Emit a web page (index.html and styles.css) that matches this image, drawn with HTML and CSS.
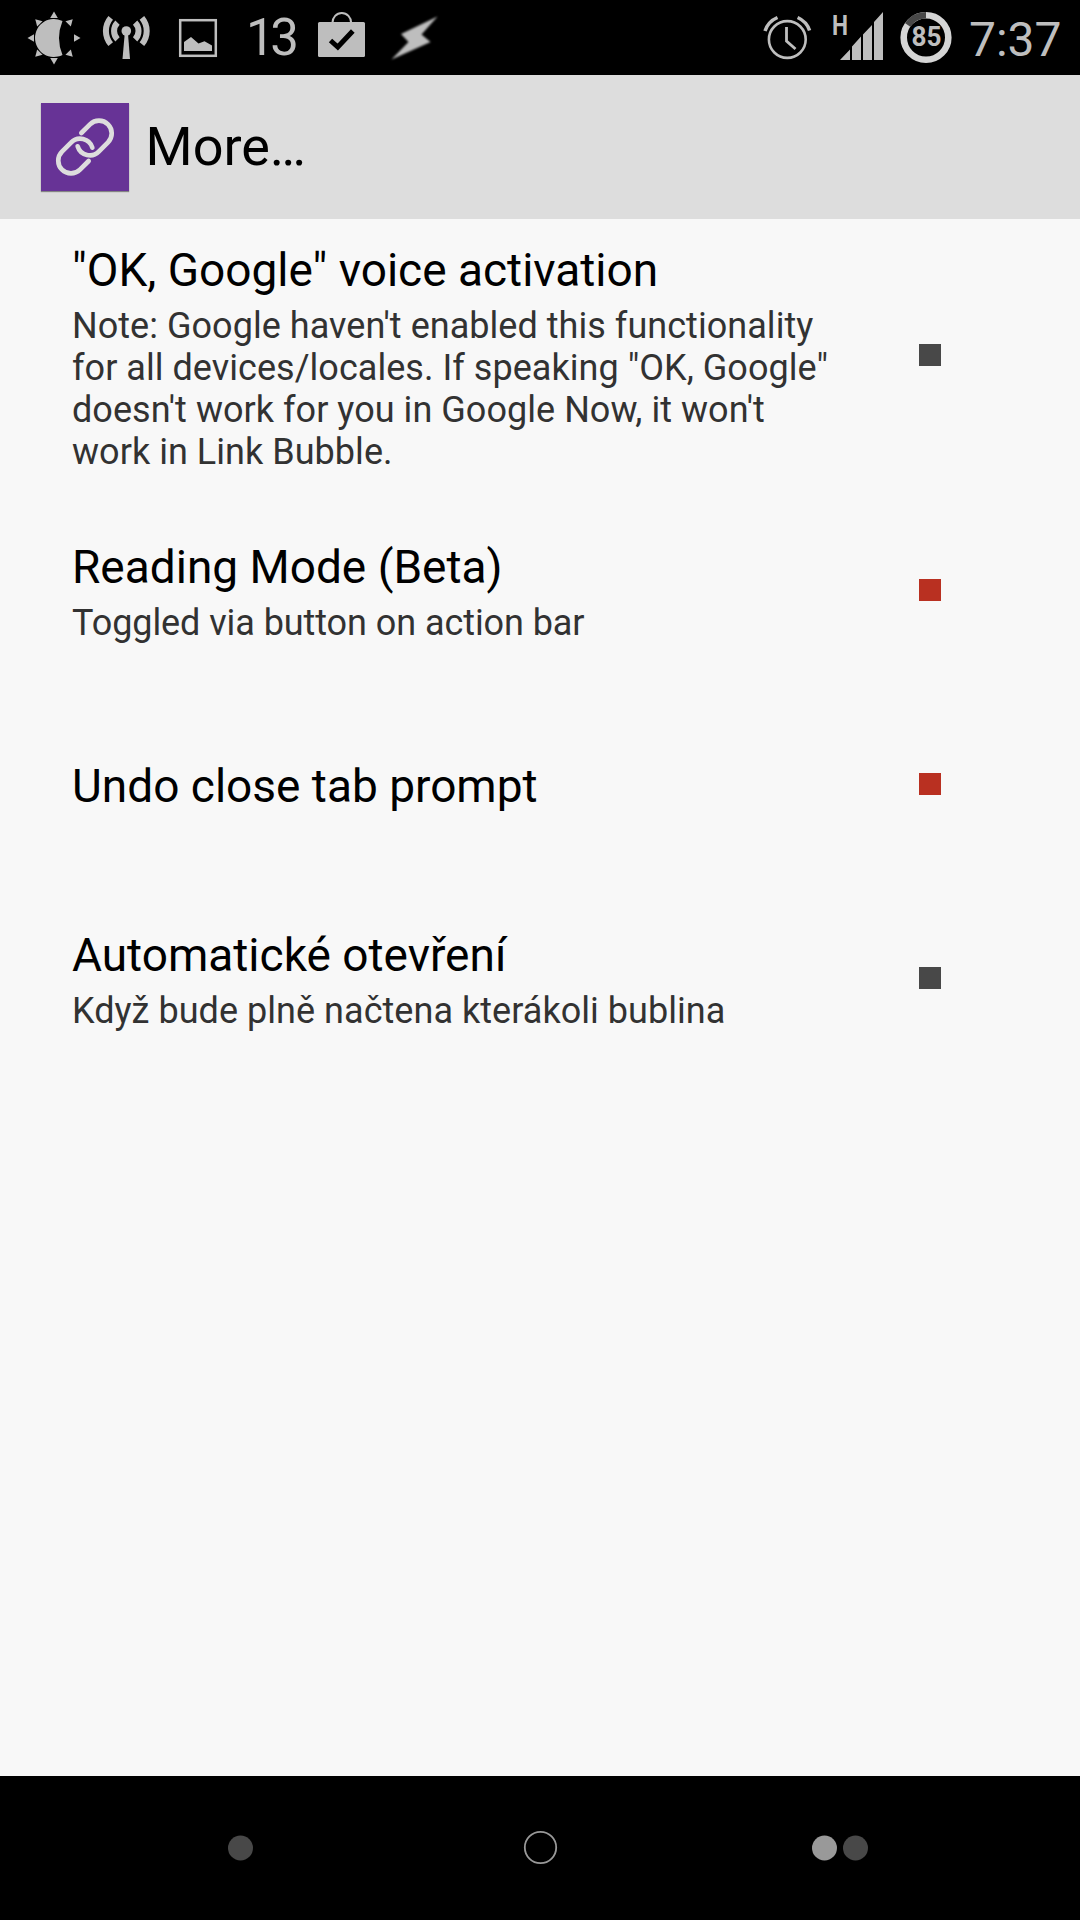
FILE: index.html
```html
<!DOCTYPE html>
<html lang="cs">
<head>
<meta charset="utf-8">
<title>More…</title>
<link rel="stylesheet" href="styles.css">
</head>
<body>
<div class="screen">
  <div class="statusbar">
    <div class="status-group">
      <svg width="56" height="75" viewBox="26 0 56 75" fill="currentColor">
        <path d="M62.5 21A19 19 0 1 0 62.5 55Q55.500 38 62.500 21Z"/>
        <g><path id="ray" d="M54 11.500L57.800 18H50.200Z"/>
          <use href="#ray" transform="rotate(45 54 38)"/><use href="#ray" transform="rotate(90 54 38)"/>
          <use href="#ray" transform="rotate(135 54 38)"/><use href="#ray" transform="rotate(180 54 38)"/>
          <use href="#ray" transform="rotate(225 54 38)"/><use href="#ray" transform="rotate(270 54 38)"/>
          <use href="#ray" transform="rotate(315 54 38)"/></g>
      </svg>
      <svg width="50" height="75" viewBox="101 0 50 75">
        <circle cx="126.300" cy="31" r="4.800" fill="currentColor"/>
        <path d="M124.700 34L122.500 59H130L128 34Z" fill="currentColor"/>
        <path d="M117.500 22.600A12 12 0 0 0 117.500 39.400M135.100 22.600A12 12 0 0 1 135.100 39.400M110.700 17.900A20.300 20.300 0 0 0 110.700 44.100M141.900 17.900A20.300 20.300 0 0 1 141.900 44.100" fill="none" stroke="currentColor" stroke-width="6"/>
      </svg>
      <svg width="40" height="75" viewBox="178 0 40 75">
        <rect x="180.200" y="20.200" width="35.600" height="35.600" fill="none" stroke="currentColor" stroke-width="2.500"/>
        <path d="M184 51V42L191 37L198.500 43.500L204.500 41.300L212 45.500V51Z" fill="currentColor"/>
      </svg>
      <span class="temperature">13</span>
      <svg width="50" height="75" viewBox="317 0 50 75">
        <rect x="318" y="22" width="47" height="35" rx="1.500" fill="currentColor"/>
        <path d="M332.400 23A9.400 10 0 0 1 351.200 23" fill="none" stroke="currentColor" stroke-width="2"/>
        <path d="M330.500 40.500L337.800 47L352.800 31" fill="none" stroke="#000" stroke-width="5"/>
      </svg>
      <svg class="bolt" width="52" height="75" viewBox="389 0 52 75" fill="currentColor">
        <path d="M437.500 16.500L421.500 34.500L430.500 42L391.500 59.500L408.500 42L401 34Z"/>
      </svg>
    </div>
    <div class="status-group">
      <svg class="alarm" width="50" height="75" viewBox="762 0 50 75" fill="none" stroke="currentColor">
        <circle cx="787.300" cy="39.500" r="18.400" stroke-width="2.600"/>
        <path d="M786.500 27V41L795.500 49" stroke-width="2.800"/>
        <path d="M765 31Q768 21.500 777.500 17.500M797.600 17.500Q806.600 21.500 809.600 30.500" stroke-width="3.500"/>
      </svg>
      <svg class="signal" width="52" height="75" viewBox="832 0 52 75" fill="currentColor">
        <text class="network" x="832" y="35" textLength="16" lengthAdjust="spacingAndGlyphs">H</text>
        <path d="M840 60L850 49.500V60ZM852 60V46.500L861 36.500V60ZM863 60V34.500L872 25V60ZM874 60V22L883 12V60Z"/>
      </svg>
      <svg width="52" height="75" viewBox="899.500 0 52 75">
        <circle cx="925.500" cy="37.500" r="22.300" fill="none" stroke="#d5d5d5" stroke-width="6.600"/>
        <path d="M907.100 24.900A22.300 22.300 0 0 1 925.500 15.200" fill="none" stroke="#484848" stroke-width="6.600"/>
        <text class="charge" x="926" y="46" text-anchor="middle" textLength="30" lengthAdjust="spacingAndGlyphs">85</text>
      </svg>
      <span class="clock">7:37</span>
    </div>
  </div>

  <header class="actionbar">
    <svg class="app-icon" viewBox="123 99 264 264" fill="none" stroke="#ddd" stroke-width="14" stroke-linecap="round">
      <path d="M244 189L270 163A38 38 0 0 1 324 217L297 244A38 38 0 0 1 233 229"/>
      <path d="M266 273L240 299A38 38 0 0 1 186 245L213 218A38 38 0 0 1 277 233"/>
    </svg>
    <h1 class="page-title">More…</h1>
  </header>

  <main class="settings">
    <div class="row tall">
      <div class="label">
        <div class="title">"OK, Google" voice activation</div>
        <div class="summary">Note: Google haven't enabled this functionality<br>for all devices/locales. If speaking "OK, Google"<br>doesn't work for you in Google Now, it won't<br>work in Link Bubble.</div>
      </div>
      <span class="toggle"></span>
    </div>
    <div class="row">
      <div class="label">
        <div class="title">Reading Mode (Beta)</div>
        <div class="summary tight">Toggled via button on action bar</div>
      </div>
      <span class="toggle on"></span>
    </div>
    <div class="row single">
      <div class="label"><div class="title">Undo close tab prompt</div></div>
      <span class="toggle on"></span>
    </div>
    <div class="row">
      <div class="label">
        <div class="title">Automatické otevření</div>
        <div class="summary">Když bude plně načtena kterákoli bublina</div>
      </div>
      <span class="toggle"></span>
    </div>
  </main>

  <nav class="navbar">
    <svg width="1080" height="144" viewBox="0 0 1080 144">
      <circle cx="240.500" cy="72" r="12.500" fill="#484848"/>
      <circle cx="540.500" cy="71.500" r="15.700" fill="none" stroke="#999" stroke-width="1.800"/>
      <circle cx="824.500" cy="72" r="12.500" fill="#999"/>
      <circle cx="855.500" cy="72" r="12.500" fill="#484848"/>
    </svg>
  </nav>
</div>
</body>
</html>
```
FILE: styles.css
```css
* { box-sizing: border-box; }
body { margin: 0; font-family: Roboto, "Noto Sans", sans-serif; background: #000; }
svg { display: block; flex: none; }
.screen { width: 1080px; height: 1920px; display: flex; flex-direction: column; background: #f8f8f8; overflow: hidden; }

.statusbar { height: 75px; flex: none; display: flex; justify-content: space-between; padding: 0 18px 0 26px; background: #000; color: #bebebe; }
.status-group { display: flex; }
.status-group:first-child svg + svg { margin-left: 19px; }
.status-group:first-child svg:nth-of-type(3) { margin-left: 27px; }
.temperature { width: 70px; margin: 0 7px 0 22px; padding-left: 6px; font: 400 51px/75px Roboto, sans-serif; letter-spacing: -4.5px; }
.status-group:first-child svg.bolt { margin-left: 22px; }
.bolt { filter: blur(0.9px); }
.alarm { margin-right: 20px; }
.signal { margin-right: 15.5px; }
.network { font: 700 28px Roboto, sans-serif; }
.charge { font: 700 28px Roboto, sans-serif; fill: #bebebe; }
.clock { width: 93px; margin-left: 17.5px; font-size: 48px; line-height: 79px; white-space: nowrap; }

.actionbar { height: 144px; flex: none; display: flex; align-items: center; padding-left: 41px; background: #ddd; }
.app-icon { width: 88px; height: 88px; background: #673396; box-shadow: 0 1px 1px rgba(0, 0, 0, .4); }
.page-title { margin: 0 0 0 16.5px; font-size: 54px; font-weight: 400; line-height: 64px; color: #000; }

.settings { flex: 1; display: flex; flex-direction: column; gap: 2px; }
.row { height: 192px; display: flex; align-items: center; justify-content: space-between; padding: 0 139px 0 72px; }
.row.tall { height: 272px; margin-bottom: 1px; }
.label { display: flex; flex-direction: column; gap: 7px; padding-top: 3px; white-space: nowrap; }
.tall .label { padding-top: 5px; }
.single .label { padding-top: 4px; }
.title { font-size: 46px; line-height: 56px; color: #000; }
.summary { font-size: 36px; line-height: 42px; letter-spacing: 0.04px; color: #323232; }
.summary.tight { letter-spacing: -0.07px; }
.toggle { width: 22px; height: 22px; background: #484848; }
.toggle.on { background: #b93021; }

.navbar { height: 144px; flex: none; background: #000; }
```
